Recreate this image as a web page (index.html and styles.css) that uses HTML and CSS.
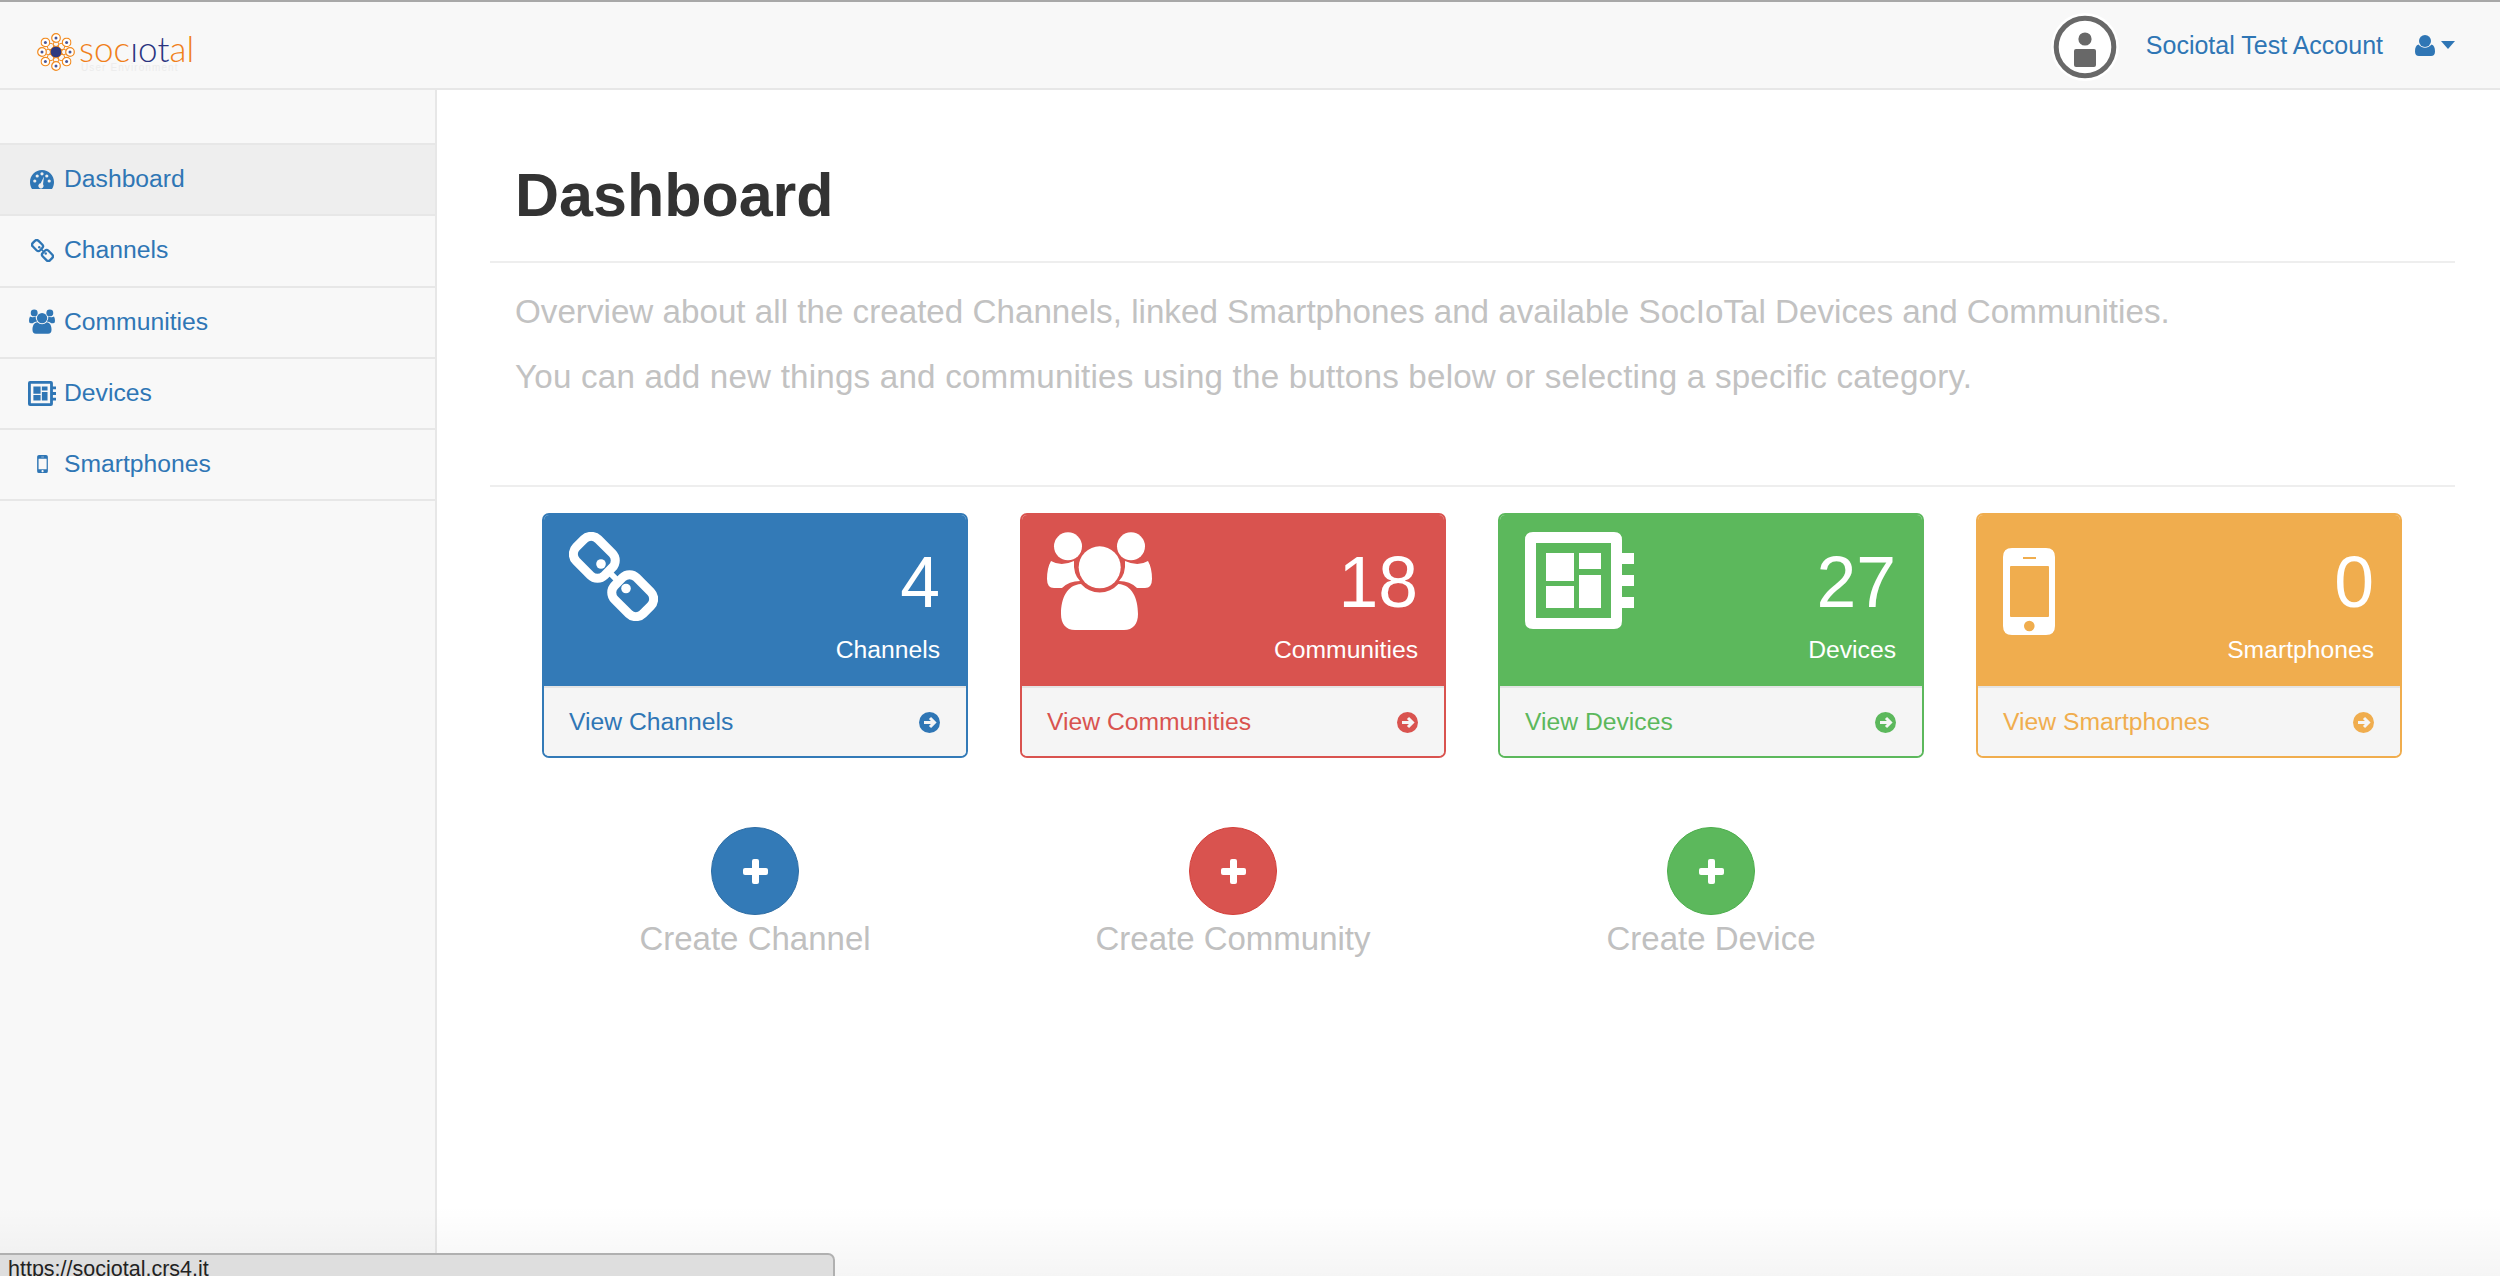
FILE: index.html

```html
<!doctype html>
<html>
<head>
<meta charset="utf-8">
<title>SocIoTal Dashboard</title>
<link rel="stylesheet" href="styles.css">
</head>

<body>
<!-- icon set -->
<svg class="sprite" xmlns="http://www.w3.org/2000/svg">
	<symbol id="i-gauge" viewBox="0 0 24 19">
		<path fill-rule="evenodd" d="M2 19C.7 17 0 14.600 0 12 0 5.400 5.400 0 12 0s12 5.400 12 12c0 2.600-.7 5-2 7ZM3.200 11a1.600 1.600 0 1 0 3.200 0 1.600 1.600 0 1 0-3.200 0ZM5.600 6a1.600 1.600 0 1 0 3.200 0 1.600 1.600 0 1 0-3.200 0ZM10.400 3.800a1.600 1.600 0 1 0 3.200 0 1.600 1.600 0 1 0-3.200 0ZM17.600 11a1.600 1.600 0 1 0 3.200 0 1.600 1.600 0 1 0-3.200 0ZM15.200 6a1.600 1.600 0 1 0 3.200 0 1.600 1.600 0 1 0-3.200 0ZM14 6.500l-3.300 6.800a2.600 2.600 0 1 0 2.300 1Z"/>
	</symbol>
	<symbol id="i-link" viewBox="0 0 89 89">
		<g fill="none" stroke="currentColor" stroke-width="9">
			<rect x="5.300" y="9.800" width="40" height="31" rx="10" transform="rotate(45 25.300 25.300)"/>
			<rect x="43.700" y="48.200" width="40" height="31" rx="10" transform="rotate(45 63.700 63.700)"/>
			<path d="M38 38 51 51" stroke-width="6"/>
		</g>
		<circle cx="32" cy="32" r="4.800"/>
		<circle cx="57" cy="56.500" r="4.800"/>
	</symbol>
	<symbol id="i-users" viewBox="0 0 105 98">
		<circle cx="21" cy="14.300" r="14"/>
		<circle cx="84" cy="14.300" r="14"/>
		<circle cx="52.700" cy="35.300" r="21"/>
		<path d="M14 82C14 66 20 53 34 52A25 25 0 0 0 71.400 52C85 53 91 66 91 82 91 92 86 98 77 98H28C19 98 14 92 14 82Z"/>
		<path d="M4 29Q14 35 27 29 26 42 33 49 22 49 15 56H7Q0 56 0 47 0 36 4 29Z"/>
		<path d="M101 29Q91 35 78 29 79 42 72 49 83 49 90 56H98Q105 56 105 47 105 36 101 29Z"/>
	</symbol>
	<symbol id="i-chip" viewBox="0 0 109 97">
		<path fill-rule="evenodd" d="M8 0H89Q97 0 97 8V21H109V32H97V43H109V54H97V65H109V76H97V89Q97 97 89 97H8Q0 97 0 89V8Q0 0 8 0ZM11 11V86H86V11Z"/>
		<path d="M21 21H49V49H21ZM54 21H76V37H54ZM21 54H49V76H21ZM54 43H76V76H54Z"/>
	</symbol>
	<symbol id="i-phone" viewBox="0 0 52 87">
		<path fill-rule="evenodd" d="M9 0H43Q52 0 52 9V78Q52 87 43 87H9Q0 87 0 78V9Q0 0 9 0ZM20 9V11H33V9ZM8 18Q7 18 7 19V68Q7 69 8 69H45Q46 69 46 68V19Q46 18 45 18ZM21 78a5.300 5.300 0 1 0 10.600 0 5.300 5.300 0 1 0-10.600 0Z"/>
	</symbol>
	<symbol id="i-user" viewBox="0 0 20 21">
		<circle cx="10" cy="6" r="6"/>
		<path d="M3.500 9.500C5 11.500 7.300 12.700 10 12.700S15 11.500 16.500 9.500C18.800 10 20 12.500 20 16.500 20 19.500 18.500 21 16 21H4C1.500 21 0 19.500 0 16.500 0 12.500 1.200 10 3.500 9.500Z"/>
	</symbol>
	<symbol id="i-arrow" viewBox="0 0 21 21">
		<circle cx="10.500" cy="10.500" r="10.500"/>
		<path d="M5 10.500H15M11 6 15.500 10.500 11 15" fill="none" stroke="#f5f5f5" stroke-width="3"/>
	</symbol>
	<symbol id="i-plus" viewBox="0 0 25 25">
		<rect x="9" width="7" height="25" rx="2"/>
		<rect y="9" width="25" height="7" rx="2"/>
	</symbol>
	<symbol id="i-petal" viewBox="0 0 10 10">
		<circle cx="5" cy="5" r="4.300" fill="#fff" stroke="#f28a1e" stroke-width="1.200"/>
		<circle cx="5" cy="5" r="1.500" fill="#4a5798"/>
	</symbol>
</svg>

<div class="topline"></div>

<nav class="navbar">
	<a class="logo" href="#">
		<svg class="logo-mark" viewBox="0 0 38 38">
			<g fill="none" stroke="#f28a1e" stroke-width="1">
				<path d="M19 19C15 13 16 9 19 7 22 9 23 13 19 19Z"/>
				<path d="M19 19C25 23 29 22 31 19 29 16 25 15 19 19Z"/>
				<path d="M19 19C23 25 22 29 19 31 16 29 15 25 19 19Z"/>
				<path d="M19 19C13 15 9 16 7 19 9 22 13 23 19 19Z"/>
				<path d="M19 19C19 12 23 9 27 11 29 15 26 19 19 19Z"/>
				<path d="M19 19C26 19 29 23 27 27 23 29 19 26 19 19Z"/>
				<path d="M19 19C19 26 15 29 11 27 9 23 12 19 19 19Z"/>
				<path d="M19 19C12 19 9 15 11 11 15 9 19 12 19 19Z"/>
			</g>
			<use href="#i-petal" x="14" y="0" width="10" height="10"/>
			<use href="#i-petal" x="24.600" y="4.400" width="10" height="10"/>
			<use href="#i-petal" x="28" y="14" width="10" height="10"/>
			<use href="#i-petal" x="24.600" y="23.600" width="10" height="10"/>
			<use href="#i-petal" x="14" y="28" width="10" height="10"/>
			<use href="#i-petal" x="3.400" y="23.600" width="10" height="10"/>
			<use href="#i-petal" x="0" y="14" width="10" height="10"/>
			<use href="#i-petal" x="3.400" y="4.400" width="10" height="10"/>
			<circle cx="19" cy="19" r="5.800" fill="#2f3a80" stroke="#f28a1e" stroke-width=".8"/>
		</svg>
		<span class="logo-text">
			<span class="logo-name">soc<b>ıot</b>al</span>
			<span class="logo-sub">User Environment</span>
		</span>
	</a>
	<div class="nav-right">
		<svg class="avatar" viewBox="0 0 68 68">
			<circle cx="34" cy="34" r="34" fill="#fff"/>
			<circle cx="34" cy="34" r="28.800" fill="#fff" stroke="#686868" stroke-width="5"/>
			<circle cx="34" cy="26" r="6.600" fill="#686868"/>
			<rect x="23" y="36" width="22" height="18" rx="2" fill="#686868"/>
		</svg>
		<a class="nav-name" href="#">Sociotal Test Account</a>
		<a class="nav-user" href="#">
			<svg class="ico-user"><use href="#i-user"/></svg>
			<span class="caret"></span>
		</a>
	</div>
</nav>

<div class="wrapper">
	<aside class="sidebar">
		<ul class="side-menu">
			<li class="active"><a href="#"><span class="side-ico"><svg class="s-gauge"><use href="#i-gauge"/></svg></span>Dashboard</a></li>
			<li><a href="#"><span class="side-ico"><svg class="s-link"><use href="#i-link"/></svg></span>Channels</a></li>
			<li><a href="#"><span class="side-ico"><svg class="s-users"><use href="#i-users"/></svg></span>Communities</a></li>
			<li><a href="#"><span class="side-ico"><svg class="s-chip"><use href="#i-chip"/></svg></span>Devices</a></li>
			<li><a href="#"><span class="side-ico"><svg class="s-phone"><use href="#i-phone"/></svg></span>Smartphones</a></li>
		</ul>
	</aside>

	<main class="content">
		<div class="page-header">
			<h1>Dashboard</h1>
		</div>
		<div class="intro">
			<p>Overview about all the created Channels, linked Smartphones and available SocIoTal Devices and Communities.</p>
			<p>You can add new things and communities using the buttons below or selecting a specific category.</p>
		</div>

		<div class="panels">
			<div class="panel blue">
				<div class="panel-head">
					<svg class="big-link"><use href="#i-link"/></svg>
					<div class="panel-count"><div class="huge">4</div><div class="label">Channels</div></div>
				</div>
				<a class="panel-foot" href="#"><span>View Channels</span><svg class="arrow"><use href="#i-arrow"/></svg></a>
			</div>
			<div class="panel red">
				<div class="panel-head">
					<svg class="big-users"><use href="#i-users"/></svg>
					<div class="panel-count"><div class="huge">18</div><div class="label">Communities</div></div>
				</div>
				<a class="panel-foot" href="#"><span>View Communities</span><svg class="arrow"><use href="#i-arrow"/></svg></a>
			</div>
			<div class="panel green">
				<div class="panel-head">
					<svg class="big-chip"><use href="#i-chip"/></svg>
					<div class="panel-count"><div class="huge">27</div><div class="label">Devices</div></div>
				</div>
				<a class="panel-foot" href="#"><span>View Devices</span><svg class="arrow"><use href="#i-arrow"/></svg></a>
			</div>
			<div class="panel orange">
				<div class="panel-head">
					<svg class="big-phone"><use href="#i-phone"/></svg>
					<div class="panel-count"><div class="huge">0</div><div class="label">Smartphones</div></div>
				</div>
				<a class="panel-foot" href="#"><span>View Smartphones</span><svg class="arrow"><use href="#i-arrow"/></svg></a>
			</div>
		</div>

		<div class="creates">
			<a class="create blue" href="#"><span class="create-btn"><svg class="plus"><use href="#i-plus"/></svg></span>Create Channel</a>
			<a class="create red" href="#"><span class="create-btn"><svg class="plus"><use href="#i-plus"/></svg></span>Create Community</a>
			<a class="create green" href="#"><span class="create-btn"><svg class="plus"><use href="#i-plus"/></svg></span>Create Device</a>
		</div>
	</main>
</div>

<div class="fade"></div>
<div class="status">https://sociotal.crs4.it</div>
</body>
</html>
```

FILE: styles.css

```css
*{ margin:0; padding:0; box-sizing:border-box; list-style:none;}
html,body{ height:100%; overflow:hidden;}
body{ display:flex; flex-direction:column; background:#fff; color:#333; font-family:"Liberation Sans",Arial,sans-serif; font-size:24.7px;}
a{ color:#2f76b5; text-decoration:none;}
svg{ fill:currentColor; display:block;}
.sprite{ display:none;}

.topline{ height:2px; background:#a8a8a8; flex:none;}

.navbar{ height:88px; flex:none; display:flex; justify-content:space-between; align-items:center; padding:4px 45px 0 37px; background:#f8f8f8; border-bottom:2px solid #e7e7e7;}
.logo{ display:flex; align-items:center; gap:4px; margin-top:10px;}
.logo-mark{ width:38px; height:38px;}
.logo-text{ display:flex; flex-direction:column; width:116px;}
.logo-name{ font-family:Lato,"Liberation Sans",sans-serif; font-weight:300; font-size:35px; line-height:30px; color:#f0801a; letter-spacing:.1px;}
.logo-name b{ font-weight:300; color:#2a3480;}
.logo-sub{ font-size:10px; line-height:9px; color:#ececec; letter-spacing:1.1px; padding-left:2px; white-space:nowrap;}

.nav-right{ display:flex; align-items:center;}
.avatar{ width:68px; height:68px;}
.nav-name{ margin-left:27px; font-size:25px; position:relative; top:-2px;}
.nav-user{ margin-left:32px; display:flex; align-items:center; gap:6px; position:relative; top:-2px;}
.ico-user{ width:20px; height:21px;}
.caret{ width:0; height:0; border-top:8px solid #2f76b5; border-left:7px solid transparent; border-right:7px solid transparent;}

.wrapper{ flex:1; display:flex; min-height:0;}
.sidebar{ width:437px; flex:none; background:#f8f8f8; border-right:2px solid #e7e7e7; padding-top:53px;}
.side-menu{ border-top:2px solid #e7e7e7;}
.side-menu li{ height:71.3px; border-bottom:2px solid #e7e7e7;}
.side-menu li.active{ background:#eee;}
.side-menu a{ display:flex; align-items:center; height:100%; padding:0 0 1px 26px;}
.side-ico{ width:32px; margin-right:6px; display:flex; justify-content:center; flex:none;}
.s-gauge{ width:24px; height:19px;}
.s-link{ width:23px; height:23px;}
.s-users{ width:26px; height:25px;}
.s-chip{ width:28px; height:25px;}
.s-phone{ width:11px; height:18px;}

.content{ flex:1; min-width:0; padding:0 45px 0 53px;}
.page-header{ padding:70px 26px 30px 25px; border-bottom:2px solid #eee;}
.page-header h1{ font-size:61px; line-height:71px; color:#333;}
.intro{ padding:0 26px 0 25px; height:208px; border-bottom:2px solid #eee;}
.intro p{ font-size:33.2px; line-height:65px; color:#c2c2c2;}
.intro p:first-child{ margin-top:16px;}
.intro p + p{ letter-spacing:.19px;}

.panels,.creates{ display:grid; grid-template-columns:repeat(4,426px); column-gap:52px; padding-left:52px;}
.panels{ margin-top:26px;}
.panel{ height:245px; border-radius:7px; border:2px solid; overflow:hidden; display:flex; flex-direction:column;}
.panel-head{ height:171px; flex:none; display:flex; justify-content:space-between; align-items:flex-start; padding:17px 26px 0 25px; color:#fff;}
.panel-count{ text-align:right; margin-top:14px;}
.huge{ font-size:71.5px; line-height:72px;}
.label{ line-height:28px; margin-top:18px;}
.big-link{ width:89px; height:89px;}
.big-users{ width:105px; height:98px;}
.big-chip{ width:109px; height:97px;}
.big-phone{ width:52px; height:87px; margin-top:16px;}
.panel-foot{ flex:1; display:flex; justify-content:space-between; align-items:center; padding:0 26px 0 25px; background:#f5f5f5; border-top:2px solid #e4e4e4;}
.arrow{ width:21px; height:21px;}

.blue .panel-head,.blue .create-btn{ background:#337ab7;}
.red .panel-head,.red .create-btn{ background:#d9534f;}
.green .panel-head,.green .create-btn{ background:#5cb85c;}
.orange .panel-head{ background:#f0ad4e;}
.panel.blue{ border-color:#337ab7;}
.panel.red{ border-color:#d9534f;}
.panel.green{ border-color:#5cb85c;}
.panel.orange{ border-color:#f0ad4e;}
.blue .panel-foot{ color:#2f76b5;}
.red .panel-foot{ color:#d9534f;}
.green .panel-foot{ color:#5cb85c;}
.orange .panel-foot{ color:#f0ad4e;}

.creates{ margin-top:69px;}
.create{ display:flex; flex-direction:column; align-items:center; font-size:33px; line-height:38px; color:#c0c0c0;}
.create-btn{ width:88px; height:88px; border-radius:50%; display:flex; align-items:center; justify-content:center; margin-bottom:5px; border:1px solid; color:#fff;}
.create.blue .create-btn{ border-color:#2e6da4;}
.create.red .create-btn{ border-color:#d43f3a;}
.create.green .create-btn{ border-color:#4cae4c;}
.plus{ width:25px; height:25px;}

.fade{ position:absolute; left:0; right:0; bottom:0; height:70px; background:linear-gradient(rgba(0,0,0,0),rgba(0,0,0,.04)); pointer-events:none;}
.status{ position:absolute; left:0; top:1253px; width:835px; height:30px; padding:1px 0 0 8px; background:#dedede; border:2px solid #b0b0b0; border-left:0; border-radius:0 7px 0 0; font-size:21.5px; line-height:26px; color:#222;}
```
